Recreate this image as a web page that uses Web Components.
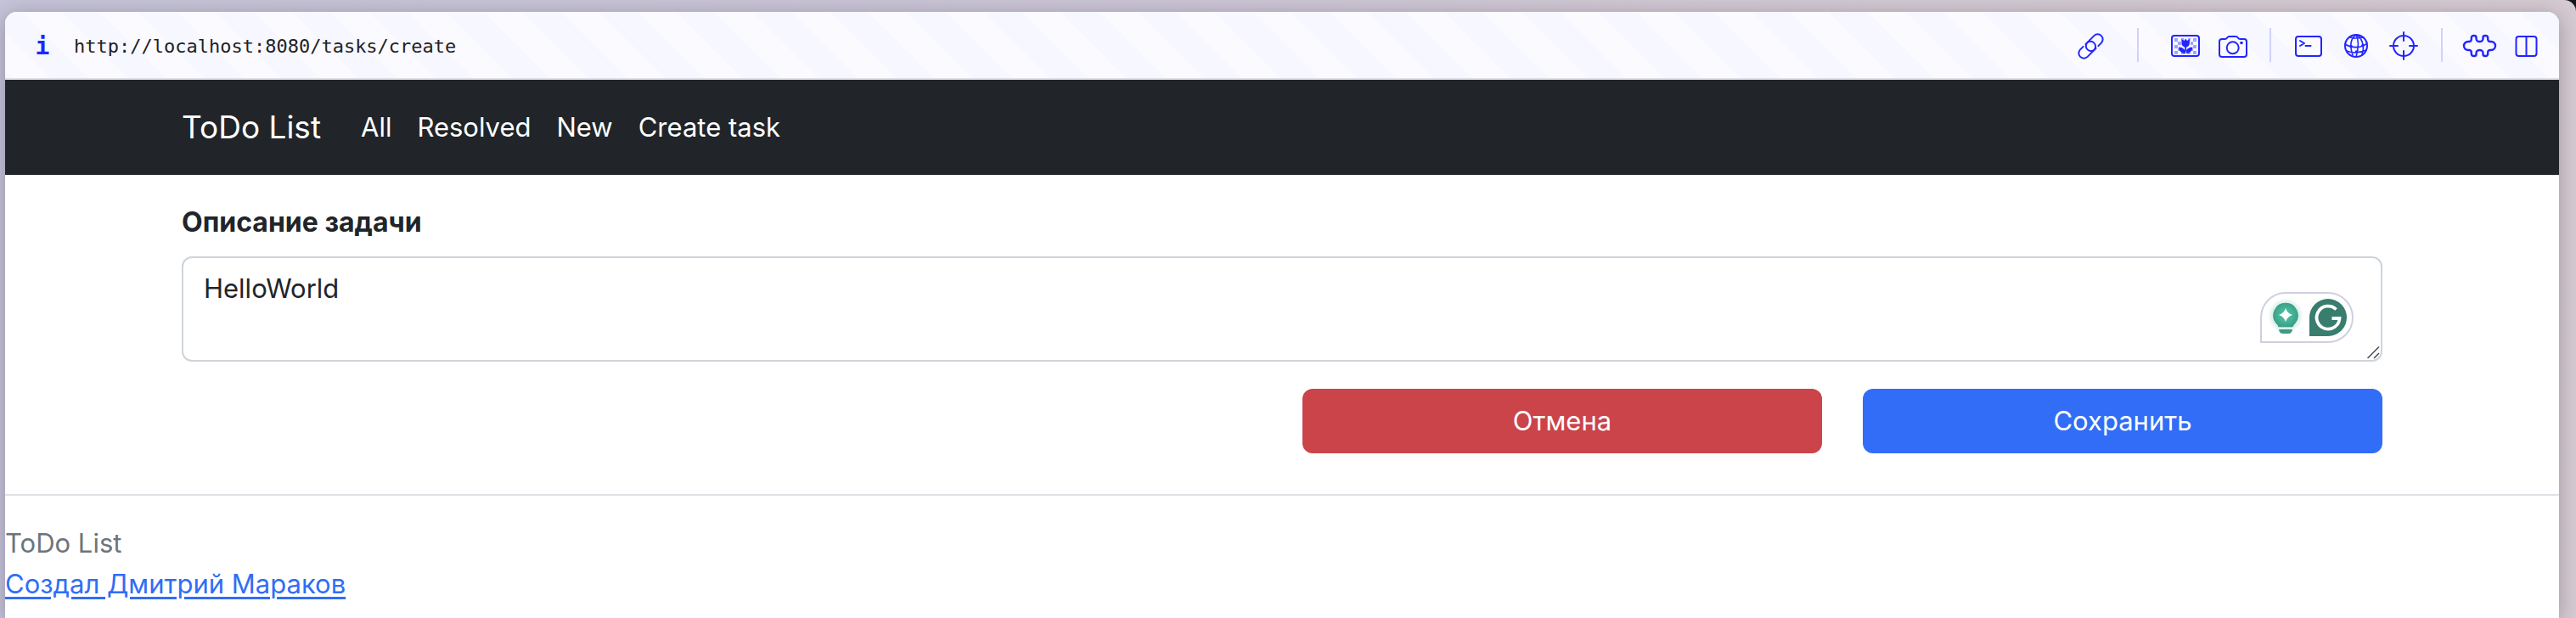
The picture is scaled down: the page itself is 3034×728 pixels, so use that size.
<!DOCTYPE html>
<html lang="ru">
<head>
<meta charset="utf-8">
<title>ToDo List</title>
<style>
html { background: #16161a; }
body {
  margin: 0;
  font-family: Inter, "Liberation Sans", sans-serif;
  font-size: 31px;
  line-height: 48px;
  color: #212529;
  --container: 2640px;
  --gutter: 24px;
  --accent: #2225ff;
}
</style>
</head>
<body>
<browser-window>
  <browser-toolbar slot="toolbar" url="http://localhost:8080/tasks/create"></browser-toolbar>
  <site-header>
    <nav-link href="#all">All</nav-link>
    <nav-link href="#resolved">Resolved</nav-link>
    <nav-link href="#new">New</nav-link>
    <nav-link href="#create">Create task</nav-link>
  </site-header>
  <task-form label="Описание задачи" value="HelloWorld">
    <action-button slot="actions" variant="danger">Отмена</action-button>
    <action-button slot="actions" variant="primary">Сохранить</action-button>
  </task-form>
  <site-footer></site-footer>
</browser-window>

<script>
class BaseElement extends HTMLElement {
  connectedCallback() {
    if (this.shadowRoot) return;
    this.attachShadow({ mode: 'open' }).innerHTML = this.render();
  }
}

customElements.define('browser-window', class extends BaseElement {
  render() {
    return `<style>
      :host {
        display: flex; box-sizing: border-box; min-height: 100vh; padding: 14px 20px 0 6px;
        background: linear-gradient(to right, #c6c4d8, #cbc5d5 45%, #d0c8d3 60%, #d6cbd1);
        border-top-right-radius: 14px; overflow: hidden;
      }
      .window {
        flex: 1; min-width: 0; background: #fff; border-radius: 14px 14px 0 0;
        box-shadow: 0 4px 24px rgba(40, 30, 60, .32);
      }
    </style>
    <div class="window"><slot name="toolbar"></slot><slot></slot></div>`;
  }
});

const ICONS = {
  link: `<g transform="translate(19.5 21.5) rotate(-45)">
      <path d="M6.500 6H11.500a6 6 0 0 0 0-12H.5a6 6 0 0 0 0 12h2"/>
      <path d="M-6.500-6H-11.500a6 6 0 0 0 0 12H-.5a6 6 0 0 0 0-12h-2"/></g>`,
  image: `<g fill="currentColor" stroke="none" opacity=".4">
      <path d="M8 12h4v4H8zM16 12h3v3h-3zM24 12h3v3h-3zM30 12h4v4h-4zM12 16h4v4h-4zM27 16h3v4h-3zM8 20h4v4H8zM30 20h4v4h-4zM12 24h3v3h-3zM27 24h3v3h-3zM8 27h4v4H8zM16 27h4v4h-4zM23 27h4v4h-4zM30 27h4v4h-4z"/></g>
      <rect x="5" y="9" width="32" height="24" rx="3"/>
      <g fill="currentColor" stroke="none"><path d="M16.500 13l3 2 1.700-2.500 1.700 2.500 3-2v5a4.700 4.700 0 0 1-9.400 0z"/>
      <path d="M20.300 20h1.800v10h-1.800zM13 22.500c5 .2 8 2.500 8.200 7.500-5-.2-7.700-2.500-8.200-7.500zM29.400 22.500c-5 .2-8 2.500-8.200 7.500 5-.2 7.700-2.500 8.200-7.500z"/></g>`,
  camera: `<path d="M8 13h3.500c1.500 0 2-.5 2.600-1.500.8-1.200 1.400-1.500 2.400-1.500h8c1 0 1.600.3 2.400 1.500.6 1 1.100 1.500 2.600 1.500H34q3 0 3 3v15q0 3-3 3H8q-3 0-3-3V16q0-3 3-3z"/>
      <circle cx="20.700" cy="23.300" r="7"/><circle cx="31" cy="17.500" r="1.800" fill="currentColor" stroke="none"/>`,
  terminal: `<rect x="5" y="10" width="30" height="23" rx="3"/><path d="M10 15l5 3-5 3M16.500 21h6"/>`,
  globe: `<g stroke-width="1.600"><circle cx="20" cy="21" r="13" stroke-width="2"/>
      <path d="M20 8c-6 4-8 12-4 24M20 8c3 5 3 15 0 26M21 8c7 5 9 15 6 23M13 11c5 2 11 1 16 0M7 19c8 5 19 5 26-1M9 27c7 3 16 2 23-1"/></g>
      <g fill="currentColor" stroke="none"><circle cx="14" cy="21.500" r="1.800"/><circle cx="28" cy="20.500" r="1.800"/><circle cx="20.500" cy="28" r="1.800"/></g>`,
  target: `<circle cx="20" cy="21" r="12"/><path d="M20 5v10M20 27v10M4 21h9M27 21h9"/>`,
  puzzle: `<path stroke-width="2.400" d="M12.500 9Q10 9 9.800 11.500V13.500Q9.600 16 7 16H6A5 5 0 0 0 6 26H7Q9.600 26 9.800 28.500V30.500Q10 33 12.500 33H13Q15.500 33 15.500 31V29.500A4 3.500 0 0 1 23.500 29.500V31Q23.500 33 26 33H26.500Q29 33 29.200 30.500V28.500Q29.400 26 32 26H33A5 5 0 0 0 33 16H32Q29.400 16 29.200 13.500V11.500Q29 9 26.500 9H26Q23.500 9 23.500 11V12.500A4 3.500 0 0 1 15.500 12.500V11Q15.500 9 13 9Z"/>`,
  split: `<rect x="6.500" y="10" width="24" height="23" rx="3"/><path d="M18.500 10v23"/>`
};

customElements.define('tool-icon', class extends BaseElement {
  render() {
    return `<style>
      :host { display: block; }
      button { display: block; width: 40px; height: 40px; padding: 0; border: 0; background: none; color: var(--accent); }
      svg { display: block; overflow: visible; }
    </style>
    <button type="button" aria-label="${this.getAttribute('name')}">
      <svg width="40" height="40" viewBox="0 0 40 40" fill="none" stroke="currentColor" stroke-width="2" stroke-linecap="round" stroke-linejoin="round">${ICONS[this.getAttribute('name')]}</svg>
    </button>`;
  }
});

customElements.define('browser-toolbar', class extends BaseElement {
  render() {
    return `<style>
      :host {
        display: flex; align-items: center; height: 78px; padding: 0 17px 0 34px;
        border-bottom: 2px solid #dfe0e5; border-radius: 14px 14px 0 0;
        background: repeating-linear-gradient(45deg, #f6f7ff 0 6px, #fbfaff 6px 38px, #f6f7ff 38px 64px);
      }
      .info, input { padding: 4px 0 0; border: 0; background: none; font: 22px/40px "DejaVu Sans Mono", monospace; }
      .info { width: 20px; color: var(--accent); font-size: 28px; font-weight: bold; }
      input { flex: 1; min-width: 0; height: 40px; margin-left: 27px; outline: 0; color: #222; }
      .group { display: flex; gap: 16px; }
      hr { width: 2px; height: 40px; margin: 0 24px; border: 0; background: #d0d1fb; }
      hr.wide { margin: 0 34px; }
    </style>
    <button class="info" type="button">i</button>
    <input type="text" aria-label="URL" spellcheck="false" value="${this.getAttribute('url')}">
    <tool-icon name="link"></tool-icon>
    <hr class="wide">
    <div class="group"><tool-icon name="image"></tool-icon><tool-icon name="camera"></tool-icon></div>
    <hr>
    <div class="group"><tool-icon name="terminal"></tool-icon><tool-icon name="globe"></tool-icon><tool-icon name="target"></tool-icon></div>
    <hr>
    <div class="group"><tool-icon name="puzzle"></tool-icon><tool-icon name="split"></tool-icon></div>`;
  }
});

customElements.define('site-header', class extends BaseElement {
  render() {
    return `<style>
      :host { display: block; background: #212529; color: #fff; }
      nav { display: flex; align-items: center; box-sizing: border-box; max-width: var(--container); min-height: 112px; margin: 0 auto; padding: 0 var(--gutter); }
      .brand { margin-right: 32px; color: inherit; font-size: 37px; line-height: 60px; text-decoration: none; white-space: nowrap; }
    </style>
    <nav><a class="brand" href="#home">ToDo List</a><slot></slot></nav>`;
  }
});

customElements.define('nav-link', class extends BaseElement {
  render() {
    return `<style>
      :host { display: block; }
      a { display: block; padding: 16px 15px; color: inherit; text-decoration: none; white-space: nowrap; }
    </style>
    <a href="${this.getAttribute('href')}"><slot></slot></a>`;
  }
});

customElements.define('action-button', class extends BaseElement {
  render() {
    return `<style>
      :host { display: block; }
      button { display: block; width: 100%; padding: 14px 24px; border: 0; border-radius: 12px; background: #316df6; color: #fff; font: inherit; }
      :host([variant=danger]) button { background: #ca444a; }
    </style>
    <button type="button"><slot></slot></button>`;
  }
});

customElements.define('writing-assistant', class extends BaseElement {
  render() {
    return `<style>
      :host { display: block; box-sizing: border-box; width: 110px; height: 60px; border: 2px solid #cfd0df; border-radius: 30px 30px 30px 0; background: #fff; }
      svg { display: block; }
    </style>
    <svg width="106" height="56" viewBox="2 2 106 56">
      <defs>
        <radialGradient id="glow"><stop offset="0.6" stop-color="#43b698" stop-opacity=".3"/><stop offset="1" stop-color="#43b698" stop-opacity="0"/></radialGradient>
        <radialGradient id="bulb"><stop offset="0" stop-color="#45c4a1"/><stop offset="0.6" stop-color="#44b397"/><stop offset="1" stop-color="#3f9c86"/></radialGradient>
      </defs>
      <circle cx="30" cy="28" r="21" fill="url(#glow)"/>
      <path fill="url(#bulb)" d="M30 12.700a14.800 14.800 0 0 1 11.500 24.100Q39 39 38.500 41.200h-17Q21 39 18.500 36.800A14.800 14.800 0 0 1 30 12.700z"/>
      <path fill="#fff" d="M30 19q2 6.200 8 8-6 2-8 8-2-6-8-8 6-1.800 8-8z"/>
      <path fill="#3f9a84" d="M22 44h16q-.4 5-5 5h-6q-4.600 0-5-5z"/>
      <path fill="#387d6e" d="M58 30a22 22 0 1 1 22 22H58z"/>
      <path fill="none" stroke="#fff" stroke-width="3.800" d="M89.500 20.500A13.500 13.500 0 1 0 93.500 31H84.500"/>
    </svg>`;
  }
});

customElements.define('task-form', class extends BaseElement {
  render() {
    return `<style>
      :host { display: block; box-sizing: border-box; max-width: var(--container); margin: 0 auto; padding: 32px var(--gutter) 48px; }
      form { display: grid; grid-template-columns: repeat(4, minmax(0, 1fr)); column-gap: 48px; }
      label { grid-column: 1 / -1; margin-bottom: 16px; font-size: 32px; font-weight: 700; }
      .field { grid-column: 1 / -1; position: relative; margin-bottom: 32px; }
      textarea {
        display: block; box-sizing: border-box; width: 100%; padding: 12px 24px; border: 2px solid #ced4da; border-radius: 12px;
        background: #fff; color: inherit; font: inherit; resize: none; overflow: hidden; outline: 0;
      }
      writing-assistant { position: absolute; right: 34px; bottom: 22px; }
      .grip { position: absolute; right: 3px; bottom: 3px; }
      ::slotted(action-button:first-of-type) { grid-column: 3; }
    </style>
    <form>
      <label for="description">${this.getAttribute('label')}</label>
      <div class="field">
        <textarea id="description" rows="2" spellcheck="false">${this.getAttribute('value')}</textarea>
        <writing-assistant></writing-assistant>
        <svg class="grip" width="16" height="16" viewBox="0 0 16 16" stroke="#4a4a4a" stroke-width="1.500"><path d="M1.500 15L15 1.500M9 15l6-6"/></svg>
      </div>
      <slot name="actions"></slot>
    </form>`;
  }
});

customElements.define('site-footer', class extends BaseElement {
  render() {
    return `<style>
      :host { display: block; padding: 32px 0 16px; border-top: 2px solid #dee2e6; }
      p { margin: 0; color: #6c757d; }
      a { color: #316df6; text-decoration: underline; text-decoration-thickness: 3px; text-underline-offset: 4px; }
    </style>
    <p>ToDo List</p>
    <a href="#author">Создал Дмитрий Мараков</a>`;
  }
});
</script>
</body>
</html>
